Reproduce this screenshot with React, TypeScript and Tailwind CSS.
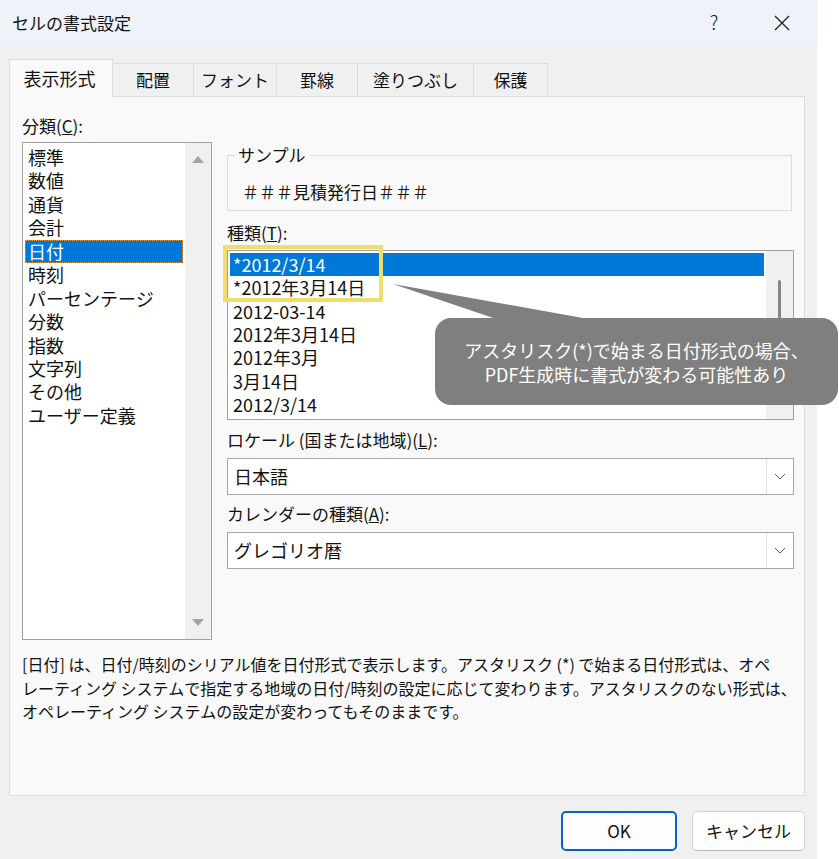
import React from "react";

const tabs = [
  { label: "表示形式", w: "w-[104px]", active: true },
  { label: "配置", w: "w-[82px]" },
  { label: "フォント", w: "w-[84px]" },
  { label: "罫線", w: "w-[82px]" },
  { label: "塗りつぶし", w: "w-[117px]" },
  { label: "保護", w: "w-[75px]" },
];

const categories = [
  "標準",
  "数値",
  "通貨",
  "会計",
  "日付",
  "時刻",
  "パーセンテージ",
  "分数",
  "指数",
  "文字列",
  "その他",
  "ユーザー定義",
];

const formats = [
  "*2012/3/14",
  "*2012年3月14日",
  "2012-03-14",
  "2012年3月14日",
  "2012年3月",
  "3月14日",
  "2012/3/14",
];

function Chevron() {
  return (
    <svg width="12" height="7" viewBox="0 0 12 7" fill="none">
      <polyline points="1,1 6,6 11,1" stroke="#606060" strokeWidth="1" />
    </svg>
  );
}

function Combo({ value }: { value: string }) {
  return (
    <div className="flex h-[37px] border border-[#a6a6a6] bg-white">
      <div className="flex-1 pl-[6px] text-[18px] leading-[35px]">{value}</div>
      <div className="flex w-[27px] items-center justify-center border-l border-[#e3e3e3]">
        <Chevron />
      </div>
    </div>
  );
}

export default function App() {
  return (
    <div className="relative h-[859px] w-[839px] overflow-hidden bg-white font-['Noto_Sans_CJK_JP','Noto_Sans',sans-serif] text-[#111]">
      <div className="flex h-[859px] w-[817px] flex-col bg-[#f0f0f0]">
        {/* title bar */}
        <div className="flex h-[45px] items-center bg-[#eef2f9] pl-[12px] text-[17px]">
          <span className="flex-1">セルの書式設定</span>
          <span className="w-[20px] text-center text-[19px] font-light">?</span>
          <div className="ml-[50px] mr-[27px] w-[16px]">
            <svg width="16" height="16" viewBox="0 0 16 16">
              <line x1="1" y1="1" x2="15" y2="15" stroke="#222" strokeWidth="1.2" />
              <line x1="15" y1="1" x2="1" y2="15" stroke="#222" strokeWidth="1.2" />
            </svg>
          </div>
        </div>

        <div className="px-[9px] pt-[14px]">
          {/* tabs */}
          <div className="flex h-[37px] items-end">
            {tabs.map((t) =>
              t.active ? (
                <div
                  key={t.label}
                  className={`relative z-10 -mb-px flex h-[38px] ${t.w} items-center justify-center border border-b-0 border-[#dcdcdc] bg-[#f9f9f9] pr-[3px] text-[18px]`}
                >
                  {t.label}
                </div>
              ) : (
                <div
                  key={t.label}
                  className={`-ml-px flex h-[33px] ${t.w} items-center justify-center border border-b-0 border-[#dcdcdc] bg-[#f0f0f0] text-[17px]`}
                >
                  {t.label}
                </div>
              )
            )}
          </div>

          {/* panel */}
          <div className="h-[700px] w-[796px] border border-[#dcdcdc] bg-[#f9f9f9] pl-[12px] pr-[10px] pt-[17px]">
            <div className="grid grid-cols-[190px_1fr] gap-x-[15px]">
              {/* left column */}
              <div>
                <div className="h-[24px] text-[17px] leading-[24px]">
                  分類(<span className="underline">C</span>):
                </div>
                <div className="mt-[4px] flex h-[498px] border border-[#a0a0a0] bg-white">
                  <div className="flex-1 px-[2px] pt-[3px]">
                    {categories.map((c) =>
                      c === "日付" ? (
                        <div
                          key={c}
                          className="h-[23.45px] bg-[#0078d7] pl-[3px] text-[18px] leading-[23.45px] text-white outline-1 outline-dotted outline-[#e8a040] -outline-offset-1"
                        >
                          {c}
                        </div>
                      ) : (
                        <div key={c} className="h-[23.45px] pl-[3px] text-[18px] leading-[23.45px]">
                          {c}
                        </div>
                      )
                    )}
                  </div>
                  <div className="flex w-[26px] flex-col items-center justify-between bg-[#f0f0f0] pb-[13px] pt-[13px]">
                    <svg width="12" height="7" viewBox="0 0 12 7">
                      <polygon points="6,0 12,7 0,7" fill="#a3a3a3" />
                    </svg>
                    <svg width="12" height="7" viewBox="0 0 12 7">
                      <polygon points="0,0 12,0 6,7" fill="#a3a3a3" />
                    </svg>
                  </div>
                </div>
              </div>

              {/* right column */}
              <div className="pt-[29px]">
                <fieldset className="w-[565px] border border-[#dcdcdc] pb-[6px] pl-[14px]">
                  <legend className="ml-[-7px] px-[3px] text-[17px] leading-[24px]">サンプル</legend>
                  <div className="pt-[13px] text-[17px] leading-[24px]">＃＃＃見積発行日＃＃＃</div>
                </fieldset>

                <div className="mt-[10px] h-[24px] text-[17px] leading-[24px]">
                  種類(<span className="underline">T</span>):
                </div>
                <div className="relative mt-[5px] flex h-[170px] border border-[#a0a0a0] bg-white">
                  <div className="flex-1 px-[2px] pt-[2px]">
                    {formats.map((f, i) =>
                      i === 0 ? (
                        <div key={i} className="h-[23.35px] bg-[#0078d7] pl-[3px] text-[18px] leading-[23.35px] text-white">
                          {f}
                        </div>
                      ) : (
                        <div key={i} className="h-[23.35px] pl-[3px] text-[18px] leading-[23.35px]">
                          {f}
                        </div>
                      )
                    )}
                  </div>
                  <div className="flex w-[27px] justify-center bg-[#f0f0f0] pt-[29px]">
                    <div className="h-[60px] w-[3px] rounded-full bg-[#858585]" />
                  </div>
                  <div className="absolute left-[-5px] top-[-6px] h-[57px] w-[160px] border-[4px] border-[#f2dc6c]" />
                </div>

                <div className="mt-[8px] h-[24px] text-[17px] leading-[24px]">
                  ロケール (国または地域)(<span className="underline">L</span>):
                </div>
                <div className="mt-[6px]">
                  <Combo value="日本語" />
                </div>
                <div className="mt-[7px] h-[24px] text-[17px] leading-[24px]">
                  カレンダーの種類(<span className="underline">A</span>):
                </div>
                <div className="mt-[6px]">
                  <Combo value="グレゴリオ暦" />
                </div>
              </div>
            </div>

            <div className="mt-[13px] whitespace-nowrap text-[16px] leading-[23.5px]">
              <div>[日付] は、日付/時刻のシリアル値を日付形式で表示します。アスタリスク (*) で始まる日付形式は、オペ</div>
              <div>レーティング システムで指定する地域の日付/時刻の設定に応じて変わります。アスタリスクのない形式は、</div>
              <div>オペレーティング システムの設定が変わってもそのままです。</div>
            </div>
          </div>

          {/* buttons */}
          <div className="mt-[15px] flex w-[796px] justify-end gap-[15px]">
            <button className="h-[40px] w-[116px] rounded-[5px] border-2 border-[#0067c0] bg-[#fdfdfd] text-[17px]">
              OK
            </button>
            <button className="h-[40px] w-[113px] rounded-[5px] border border-[#d3d3d3] border-b-[#b8b8b8] bg-[#fdfdfd] text-[17px]">
              キャンセル
            </button>
          </div>
        </div>
      </div>

      {/* callout */}
      <svg className="absolute left-[390px] top-[280px]" width="220" height="45" viewBox="0 0 220 45">
        <polygon points="3,4 215,42 115,42" fill="#7f7f7f" />
      </svg>
      <div className="absolute left-[435px] top-[318px] flex h-[87px] w-[403px] flex-col items-center justify-center rounded-[16px] bg-[#7f7f7f] text-[18px] leading-[24px] text-white">
        <div>アスタリスク(*)で始まる日付形式の場合、</div>
        <div>PDF生成時に書式が変わる可能性あり</div>
      </div>
    </div>
  );
}
